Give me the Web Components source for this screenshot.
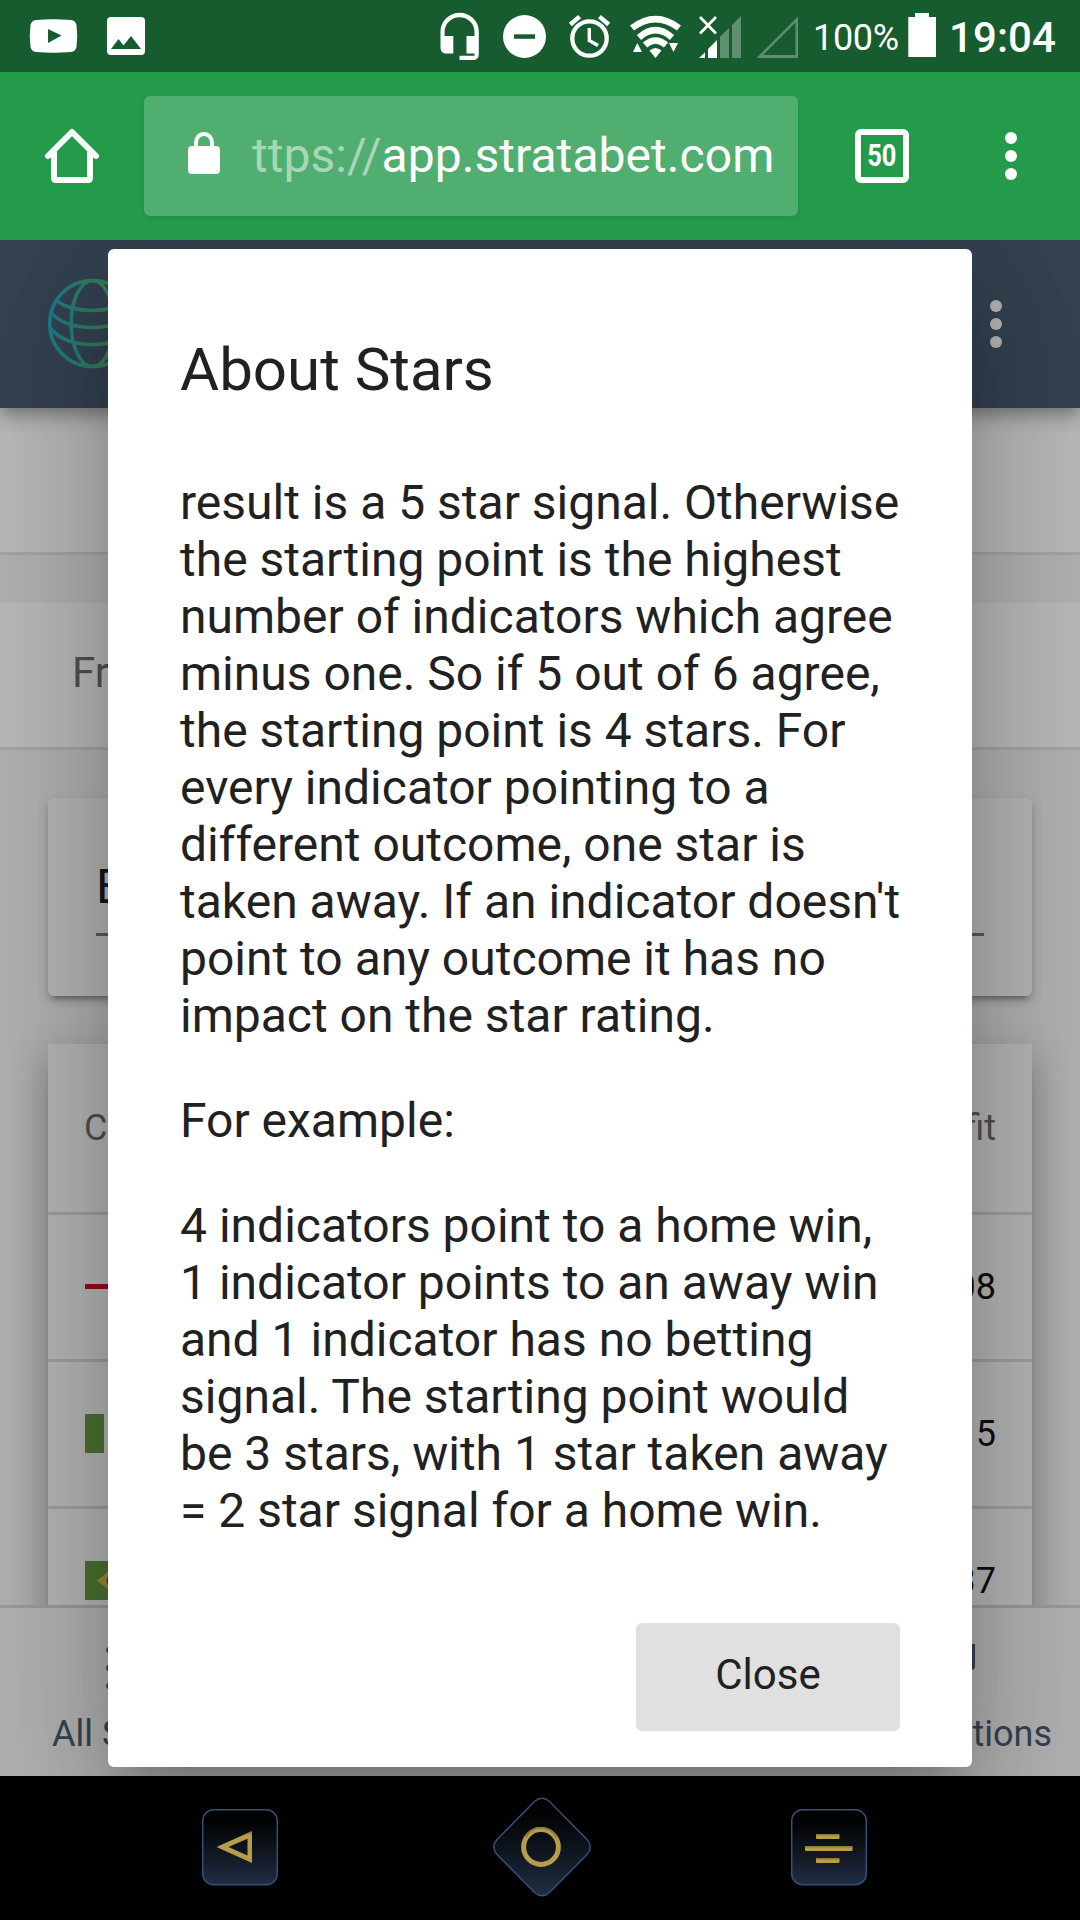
<!DOCTYPE html>
<html lang="en">
<head>
<meta charset="utf-8">
<title>Stratabet</title>
<style>
html,body{margin:0;padding:0}
body{width:1080px;height:1920px;overflow:hidden;background:#000;font-family:Roboto,"Liberation Sans",sans-serif}
</style>
</head>
<body>
<phone-screen></phone-screen>
<script>
const define = (name, html) => customElements.define(name, class extends HTMLElement {
  constructor() {
    super();
    const t = document.createElement('template');
    t.innerHTML = html;
    this.attachShadow({mode: 'open'}).append(t.content.cloneNode(true));
  }
});

define('status-bar', `
<style>
:host{display:flex;height:72px;background:#165c2e;color:#fff;justify-content:space-between}
svg{display:block;flex:none}
.right{display:flex}
.pct{width:95px;font-size:36px;line-height:72px;padding-top:2px;box-sizing:border-box;height:72px;letter-spacing:-.35px;white-space:nowrap}
.time{width:131px;font-size:42px;font-weight:500;line-height:72px;padding-top:2px;height:72px;box-sizing:border-box;letter-spacing:.1px;white-space:nowrap}
</style>
<svg width="200" height="72" viewBox="0 0 200 72" fill="#fff">
<path fill-rule="evenodd" d="M36 20Q53 18.400 71 20Q75.500 20.500 76.500 25Q78 36 76.500 47Q75.500 51.500 71 52Q53 53.500 36 52Q31.500 51.500 30.500 47Q29 36 30.500 25Q31.500 20.500 36 20ZM48 29V43L61.500 35.600Z"/>
<path fill-rule="evenodd" d="M111 17H141Q145 17 145 21V51Q145 55 141 55H111Q107 55 107 51V21Q107 17 111 17ZM111 49H141L131 36L123.500 45.500L118.500 39Z"/>
</svg>
<div class="right">
<svg width="380" height="72" viewBox="433 0 380 72" fill="#fff">
<path d="M440.500 31.500A19 18.500 0 0 1 478.800 31.500V54Q478.800 60 473 60H459.500V55.700H474.500V53.500H466.500V36H474.500V32A14.900 14.700 0 0 0 444.600 32V36H453.300V53.500H446.500Q440.500 53.500 440.500 47.500Z"/>
<circle cx="524.500" cy="36.500" r="21.500"/><path fill="#165c2e" d="M514 34.300h21v4.500h-21z"/>
<g fill="none" stroke="#fff"><circle cx="589.500" cy="38.500" r="17.200" stroke-width="4.300"/><path d="M589.300 28V40.500L598 45.500" stroke-width="3.400"/><path d="M570.300 24.500L579.600 16.600M608.700 24.500L599.400 16.600" stroke-width="4.500"/></g>
<g fill="none" stroke="#fff" stroke-width="6.500"><path d="M632 28Q655.500 10.200 679 28"/><path d="M639 37.500Q655.500 22.800 672 37.500"/><path d="M645 45Q655.500 36 666 45"/></g>
<path d="M649.500 50.500Q655.500 45.500 661.500 50.500L655.500 58ZM637.300 43L642 52H633ZM669 43h9l-4.500 9z"/>
<path d="M700 17L716 33.500M716 17L700 33.500" stroke="#fff" stroke-width="2.700"/>
<path d="M699 58L705 52.300V58ZM708 58V49L717 40V58Z"/>
<path fill="#5e9070" d="M720 58V36.500L729 28V58ZM732 58V25L741 16V58Z"/>
<path fill="#5e9070" fill-rule="evenodd" d="M756.500 58L798 16.500V58ZM763 55H795.500V22.500Z"/>
</svg>
<div class="pct">100%</div>
<svg width="41" height="72" viewBox="908 0 41 72" fill="#fff"><path d="M908.300 17H915V13H929V17H936V57H908.300Z"/></svg>
<div class="time">19:04</div>
</div>`);

define('browser-bar', `
<style>
:host{display:flex;align-items:center;height:168px;background:#239b4b;color:#fff;position:relative;z-index:1}
:host::after{content:"";position:absolute;left:0;right:0;top:168px;height:6px;background:linear-gradient(rgba(0,0,0,.3),transparent)}
svg{display:block;flex:none}
.url{width:654px;height:120px;box-sizing:border-box;border-radius:6px;background:#50af70;box-shadow:0 2px 4px rgba(0,0,0,.08);display:flex;align-items:center}
.txt{font-size:48px;line-height:56px;white-space:nowrap;margin-left:32px;overflow:hidden;width:530px;letter-spacing:.06px}
.txt i{font-style:normal;color:#a7d7b7}
.tabs{width:54px;height:54px;box-sizing:border-box;border:6px solid #fff;border-radius:6px;margin-left:57px;display:flex;align-items:center;justify-content:center}
.tabs span{font-size:31px;font-weight:700;line-height:42px;transform:scaleX(.82)}
</style>
<svg width="144" height="168" viewBox="0 72 144 168" fill="none" stroke="#fff" stroke-width="6" stroke-linejoin="round" stroke-linecap="round"><path d="M48 156L72 132L96 156M54 152V178Q54 180 56 180H88Q90 180 90 178V152"/></svg>
<div class="url">
<svg width="76" height="120" viewBox="144 96 76 120"><rect x="188" y="146" width="32" height="28" rx="4" fill="#fff"/><path d="M196 147V142.500A8 8.500 0 0 1 212 142.500V147" fill="none" stroke="#fff" stroke-width="4"/></svg>
<div class="txt"><i>ttps://</i>app.stratabet.com</div>
</div>
<div class="tabs"><span>50</span></div>
<svg width="171" height="168" viewBox="909 72 171 168" fill="#fff"><circle cx="1011" cy="138" r="6"/><circle cx="1011" cy="156" r="6"/><circle cx="1011" cy="174" r="6"/></svg>`);

define('app-header', `
<style>
:host{display:flex;flex:none;justify-content:space-between;height:168px;background:#3b5066;position:relative;box-shadow:0 6px 12px -3px rgba(0,0,0,.2),0 12px 15px rgba(0,0,0,.14),0 3px 30px rgba(0,0,0,.12)}
svg{display:block}
</style>
<svg width="160" height="168" viewBox="0 240 160 168" fill="none" stroke="url(#g)" stroke-width="3.500">
<defs><linearGradient id="g" gradientUnits="userSpaceOnUse" x1="48" y1="0" x2="137" y2="0"><stop offset="0" stop-color="#16a4c4"/><stop offset=".3" stop-color="#2ea594"/><stop offset="1" stop-color="#4ab050"/></linearGradient></defs>
<ellipse cx="92.500" cy="323.500" rx="42.800" ry="43"/><ellipse cx="92.500" cy="323.500" rx="21.300" ry="43"/>
<path d="M57 301Q70 310.500 92.500 310.500T128 301M51 313Q65 327.500 92.500 327.500T134 313M50 328Q64 344.500 92.500 344.500T135 328"/>
</svg>
<svg width="100" height="168" viewBox="980 240 100 168" fill="#f8f8f8"><circle cx="996" cy="306" r="6"/><circle cx="996" cy="324" r="6"/><circle cx="996" cy="342" r="6"/></svg>`);

define('filter-band', `
<style>
:host{display:block;flex:none;height:147px;box-sizing:border-box;background:#fff;border-bottom:3px solid #e0e0e0;padding-left:72px;font-size:42px;line-height:140px;color:rgba(0,0,0,.62);overflow:hidden}
</style><slot></slot>`);

define('select-card', `
<style>
:host{display:block;flex:none;height:198px;box-sizing:border-box;background:#fbfbfb;border-radius:6px;padding:51px 48px 0;box-shadow:0 9px 3px -6px rgba(0,0,0,.2),0 6px 6px 0 rgba(0,0,0,.14),0 3px 15px rgba(0,0,0,.12)}
div{height:87px;box-sizing:border-box;border-bottom:3px solid #757575;font-size:48px;line-height:75px;color:rgba(0,0,0,.95)}
</style><div><slot></slot></div>`);

define('data-row', `
<style>
:host{display:flex;justify-content:space-between;align-items:center;height:147px;box-sizing:border-box;border-bottom:3px solid #d9d9d9;padding:0 36px;font-size:36px;color:#060606}
:host([head]){height:171px;color:rgba(0,0,0,.62);padding-bottom:1px}
</style><slot></slot>`);

define('nation-flag', `
<style>:host{display:block;width:60px;height:39px;margin-bottom:2px}svg{display:none}
:host([code=en]) .en,:host([code=ng]) .ng,:host([code=br]) .br{display:block}</style>
<svg class="en" width="60" height="39"><path fill="#fbfbfb" d="M0 0h60v39H0z"/><path fill="#c8001c" d="M1 17h59v5H1zM27 0h6v39h-6z"/></svg>
<svg class="ng" width="60" height="39"><path fill="#fbfbfb" d="M0 0h60v39H0z"/><path fill="#61973a" d="M1 0h19v39H1zM40 0h20v39H40z"/></svg>
<svg class="br" width="60" height="39"><path fill="#61973a" d="M1 0h59v39H1z"/><path fill="#dcb83a" d="M13 19.500L30 6L47 19.500L30 33z"/><circle cx="31" cy="19.500" r="8.500" fill="#39509a"/></svg>`);

define('bottom-tabs', `
<style>
:host{display:flex;flex:none;justify-content:space-between;height:171px;box-sizing:border-box;border-top:3px solid #d2d2d2;background:#f5f5f5;color:#3b536c;position:relative;font-size:36px}
.tab{display:flex;flex-direction:column;align-items:center;padding-top:36px}
.tab svg{display:block;margin-bottom:21px}
span{line-height:42px;white-space:nowrap;height:42px}
.l{margin-left:52px;align-items:flex-start}.l svg{margin-left:53px}.r{margin-right:28px;align-items:flex-end}.r svg{margin-right:77px}
</style>
<div class="tab l"><svg width="48" height="48" viewBox="0 0 48 48" fill="currentColor"><circle cx="4.500" cy="6" r="3.300"/><circle cx="4.500" cy="24" r="3.300"/><circle cx="4.500" cy="42" r="3.300"/><path d="M13 3h33v6H13zM13 21h33v6H13zM13 39h33v6H13z"/></svg><span>All Signals</span></div>
<div class="tab r"><svg width="48" height="48" viewBox="0 0 48 48" fill="currentColor"><path d="M6 0H48V22Q48 26 44 26H6z"/></svg><span>Selections</span></div>`);

define('web-page', `
<style>
:host{display:flex;flex-direction:column;height:1536px;overflow:hidden;position:relative;background:#f2f4f6}
.scroll{height:1197px;overflow:hidden;display:flex;flex-direction:column}
filter-band+filter-band{margin-top:48px}
select-card{margin:48px 48px 0}
.table{margin:48px 48px 0;height:700px;flex:none;background:#fbfbfb;box-shadow:0 15px 15px -9px rgba(0,0,0,.2),0 24px 30px 3px rgba(0,0,0,.14),0 9px 42px 6px rgba(0,0,0,.12)}
app-header{z-index:1}
.shade{position:absolute;inset:0;z-index:2;background:rgba(33,33,33,.32)}
about-dialog{position:absolute;z-index:3;left:108px;right:108px;top:9px;height:1518px}
</style>
<app-header></app-header>
<div class="scroll">
<filter-band></filter-band>
<filter-band>From</filter-band>
<select-card>E</select-card>
<div class="table">
<data-row head><span>C</span><span>Profit</span></data-row>
<data-row><nation-flag code="en"></nation-flag><span>08</span></data-row>
<data-row><nation-flag code="ng"></nation-flag><span>5</span></data-row>
<data-row><nation-flag code="br"></nation-flag><span>37</span></data-row>
</div>
</div>
<bottom-tabs></bottom-tabs>
<div class="shade"></div>
<about-dialog>
<span slot="title">About Stars</span>
<p>result is a 5 star signal. Otherwise<br>the starting point is the highest<br>number of indicators which agree<br>minus one. So if 5 out of 6 agree,<br>the starting point is 4 stars. For<br>every indicator pointing to a<br>different outcome, one star is<br>taken away. If an indicator doesn't<br>point to any outcome it has no<br>impact on the star rating.</p>
<p>For example:</p>
<p>4 indicators point to a home win,<br>1 indicator points to an away win<br>and 1 indicator has no betting<br>signal. The starting point would<br>be 3 stars, with 1 star taken away<br>= 2 star signal for a home win.</p>
<span slot="action">Close</span>
</about-dialog>`);

define('about-dialog', `
<style>
:host{display:flex;flex-direction:column;box-sizing:border-box;padding:85px 72px 36px;background:#fff;border-radius:6px;color:#212121;box-shadow:0 33px 45px -21px rgba(0,0,0,.2),0 72px 114px 9px rgba(0,0,0,.14),0 27px 138px 24px rgba(0,0,0,.12)}
h2{margin:0;font-size:60px;font-weight:400;line-height:72px}
.body{margin-top:68px;flex:1;font-size:48px;line-height:57px;white-space:nowrap}
::slotted(p){margin:0 0 48px}
button{align-self:flex-end;width:264px;height:108px;border:0;padding:0 0 5px;border-radius:6px;background:#e0e0e0;color:#212121;font:400 42px/1 Roboto,"Liberation Sans",sans-serif}
</style>
<h2><slot name="title"></slot></h2>
<div class="body"><slot></slot></div>
<button><slot name="action"></slot></button>`);

define('nav-keys', `
<style>:host{display:block;height:144px;background:#000}svg{display:block}</style>
<svg width="1080" height="144" viewBox="0 1776 1080 144">
<defs><linearGradient id="k" x1="0" y1="0" x2="0" y2="1"><stop offset="0" stop-color="#000"/><stop offset=".2" stop-color="#030405"/><stop offset="1" stop-color="#202d42"/></linearGradient>
<linearGradient id="o" x1="0" y1="0" x2="0" y2="1"><stop offset="0" stop-color="#8e783a"/><stop offset=".15" stop-color="#b79c4b"/><stop offset="1" stop-color="#b79c4b"/></linearGradient></defs>
<g fill="url(#k)" stroke="#34507a" stroke-width="1.500">
<rect x="202.700" y="1809.700" width="74.600" height="75" rx="11"/>
<rect x="791.700" y="1809.700" width="74.600" height="75" rx="11"/>
<path d="M534.500 1801.500Q542 1795 549.500 1801.500L587 1839.500Q593.500 1847 587 1854.500L549.500 1892.500Q542 1899 534.500 1892.500L497 1854.500Q490.500 1847 497 1839.500Z"/></g>
<path fill="url(#o)" fill-rule="evenodd" d="M216.500 1847L252 1831V1863ZM228.500 1847L247.500 1855.500V1838.800Z"/>
<circle cx="541" cy="1847" r="17.400" fill="none" stroke="#b79c4b" stroke-width="5"/>
<path d="M525.500 1839A17.400 17.400 0 0 1 556.500 1839" transform="translate(0 -1.600)" fill="none" stroke="#8e783a" stroke-width="1.800"/>
<g fill="#b79c4b"><rect x="816" y="1834" width="23.500" height="5" rx="1"/><rect x="805" y="1846" width="47.500" height="5" rx="1"/><rect x="816" y="1858" width="23.500" height="5" rx="1"/></g>
<g fill="#8e783a"><path d="M816.500 1834h22.500v1.500h-22.500zM805.500 1846h46.500v1.500h-46.500zM816.500 1858h22.500v1.500h-22.500z"/></g>
</svg>`);

define('phone-screen', `
<style>:host{display:flex;flex-direction:column;width:1080px;height:1920px;overflow:hidden}</style>
<status-bar></status-bar><browser-bar></browser-bar><web-page></web-page><nav-keys></nav-keys>`);
</script>
</body>
</html>
